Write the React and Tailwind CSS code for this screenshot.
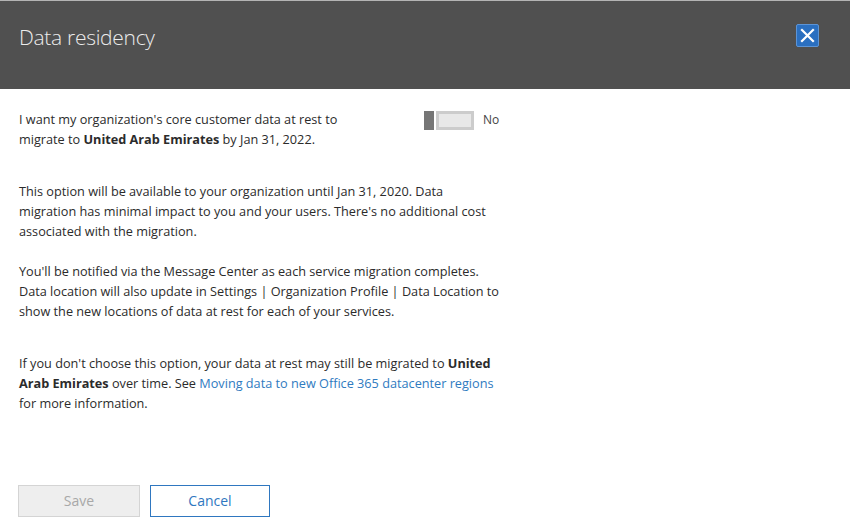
export default function App() {
  const font = { fontFamily: '"Open Sans", "Noto Sans", sans-serif' };
  return (
    <div className="w-[850px] h-[525px] bg-white overflow-hidden flex flex-col" style={font}>
      <div className="h-[89px] bg-[#505050] border-t border-[#b4b4b4] flex items-start justify-between px-[19px]">
        <div className="mt-[21px] text-[21px] text-[#ececec] font-light tracking-[-0.3px]">Data residency</div>
        <button className="mt-[23px] mr-[12px] w-[23px] h-[23px] bg-[#2a6fc0] rounded-[2px] flex items-center justify-center border border-[#5c94d6]">
          <svg width="15" height="15" viewBox="0 0 15 15">
            <path d="M2 2 L13 13 M13 2 L2 13" stroke="white" strokeWidth="2.2" strokeLinecap="square" />
          </svg>
        </button>
      </div>
      <div className="px-[19px] pt-[20px] text-[12.7px] leading-[20px] text-[#2b2b2b]">
        <div className="flex items-start">
          <div className="w-[405px]">
            I want my organization's core customer data at rest to<br />
            migrate to <b className="font-bold">United Arab Emirates</b> by Jan 31, 2022.
          </div>
          <div className="flex items-center mt-[1px]">
            <div className="w-[10px] h-[19px] bg-[#767676]" />
            <div className="ml-[2px] w-[38px] h-[19px] bg-[#e8e8e8] border-[3px] border-[#cccccc]" />
            <span className="ml-[9px] text-[12px] text-[#444]">No</span>
          </div>
        </div>
        <p className="mt-[32px]">
          This option will be available to your organization until Jan 31, 2020. Data<br />
          migration has minimal impact to you and your users. There's no additional cost<br />
          associated with the migration.
        </p>
        <p className="mt-[20px]">
          You'll be notified via the Message Center as each service migration completes.<br />
          Data location will also update in Settings | Organization Profile | Data Location to<br />
          show the new locations of data at rest for each of your services.
        </p>
        <p className="mt-[32px]">
          If you don't choose this option, your data at rest may still be migrated to <b className="font-bold">United</b><br />
          <b className="font-bold">Arab Emirates</b> over time. See <a className="text-[#2f7bbf]">Moving data to new Office 365 datacenter regions</a><br />
          for more information.
        </p>
        <div className="mt-[72px] flex gap-[10px] -ml-[1px]">
          <button className="w-[122px] h-[32px] bg-[#eeeeee] border border-[#d4d4d4] text-[14px] text-[#a8a8a8]">Save</button>
          <button className="w-[120px] h-[32px] bg-white border border-[#2f77c0] text-[14px] text-[#2f77c0]">Cancel</button>
        </div>
      </div>
    </div>
  );
}
